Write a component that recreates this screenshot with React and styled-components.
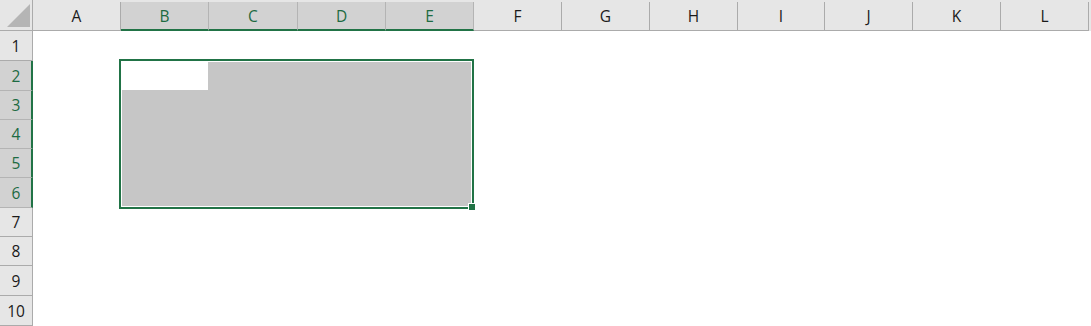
import styled, { createGlobalStyle } from 'styled-components';

const GlobalStyle = createGlobalStyle`
  html, body {
    margin: 0;
    padding: 0;
    background: #ffffff;
    overflow: hidden;
  }
`;

const GREEN = '#217346';
const LABEL_GREEN = '#1d6b42';

const columns = [
  { label: 'A', width: 88 },
  { label: 'B', width: 88, selected: true },
  { label: 'C', width: 89, selected: true },
  { label: 'D', width: 88, selected: true },
  { label: 'E', width: 88, selected: true },
  { label: 'F', width: 88 },
  { label: 'G', width: 88 },
  { label: 'H', width: 88 },
  { label: 'I', width: 87 },
  { label: 'J', width: 88 },
  { label: 'K', width: 88 },
  { label: 'L', width: 88 },
];

const rows = [
  { label: '1', height: 30 },
  { label: '2', height: 30, selected: true },
  { label: '3', height: 29, selected: true },
  { label: '4', height: 29, selected: true },
  { label: '5', height: 29, selected: true },
  { label: '6', height: 30, selected: true },
  { label: '7', height: 29 },
  { label: '8', height: 29 },
  { label: '9', height: 30 },
  { label: '10', height: 30 },
];

const Sheet = styled.div`
  position: relative;
  width: 1091px;
  height: 326px;
  overflow: hidden;
  font-family: 'Open Sans', 'Noto Sans', sans-serif;
  font-size: 15.5px;
  background: #fff;
`;

const HeaderRow = styled.div`
  display: flex;
  height: 31px;
  background: #e6e6e6;
`;

const Corner = styled.div`
  flex: none;
  width: 33px;
  box-sizing: border-box;
  border-right: 1px solid #ababab;
  border-bottom: 1px solid #ababab;
  display: flex;
  align-items: flex-end;
  justify-content: flex-end;
  padding: 0 2px 3px 0;

  svg {
    display: block;
  }
`;

const ColHeader = styled.div`
  flex: none;
  width: ${p => p.$width}px;
  box-sizing: border-box;
  margin-top: 2px;
  border-right: 1px solid ${p => (p.$selected ? '#b4b4b4' : '#ababab')};
  border-bottom: ${p => (p.$selected ? `2px solid ${GREEN}` : '1px solid #ababab')};
  background: ${p => (p.$selected ? '#d2d2d2' : '#e6e6e6')};
  color: ${p => (p.$selected ? LABEL_GREEN : '#1a1a1a')};
  display: flex;
  align-items: center;
  justify-content: center;
  padding-top: ${p => (p.$selected ? 1 : 0)}px;
`;

const Body = styled.div`
  position: relative;
  display: flex;
  flex-direction: column;
`;

const Row = styled.div`
  display: flex;
  height: ${p => p.$height}px;
`;

const RowHeader = styled.div`
  flex: none;
  width: 33px;
  box-sizing: border-box;
  background: ${p => (p.$selected ? '#d2d2d2' : '#e6e6e6')};
  color: ${p => (p.$selected ? LABEL_GREEN : '#1a1a1a')};
  border-right: ${p => (p.$selected ? `2px solid ${GREEN}` : '1px solid #ababab')};
  border-bottom: 1px solid ${p => (p.$selected ? '#b4b4b4' : '#ababab')};
  display: flex;
  align-items: center;
  justify-content: center;
  padding-left: ${p => (p.$selected ? 1 : 0)}px;
`;

const Cells = styled.div`
  flex: 1;
  background: #fff;
`;

const Selection = styled.div`
  position: absolute;
  left: 119px;
  top: 28px;
  width: 355px;
  height: 150px;
  box-sizing: border-box;
  border: 2px solid ${GREEN};
  padding: 1px;
  background: #fff;
`;

const Range = styled.div`
  width: 100%;
  height: 100%;
  background: #c6c6c6;
`;

const ActiveCell = styled.div`
  width: 86px;
  height: 28px;
  background: #fff;
`;

const FillHandle = styled.div`
  position: absolute;
  left: 469px;
  top: 173px;
  width: 6px;
  height: 6px;
  background: ${GREEN};
  box-shadow: 0 0 0 1px #fff;
`;

export default function App() {
  return (
    <>
      <GlobalStyle />
      <Sheet>
        <HeaderRow>
          <Corner>
            <svg width="23" height="23" viewBox="0 0 23 23">
              <polygon points="0,23 23,23 23,0" fill="#b5b5b5" />
            </svg>
          </Corner>
          {columns.map(c => (
            <ColHeader key={c.label} $width={c.width} $selected={c.selected}>
              {c.label}
            </ColHeader>
          ))}
        </HeaderRow>
        <Body>
          {rows.map(r => (
            <Row key={r.label} $height={r.height}>
              <RowHeader $selected={r.selected}>{r.label}</RowHeader>
              <Cells />
            </Row>
          ))}
          <Selection>
            <Range>
              <ActiveCell />
            </Range>
          </Selection>
          <FillHandle />
        </Body>
      </Sheet>
    </>
  );
}
